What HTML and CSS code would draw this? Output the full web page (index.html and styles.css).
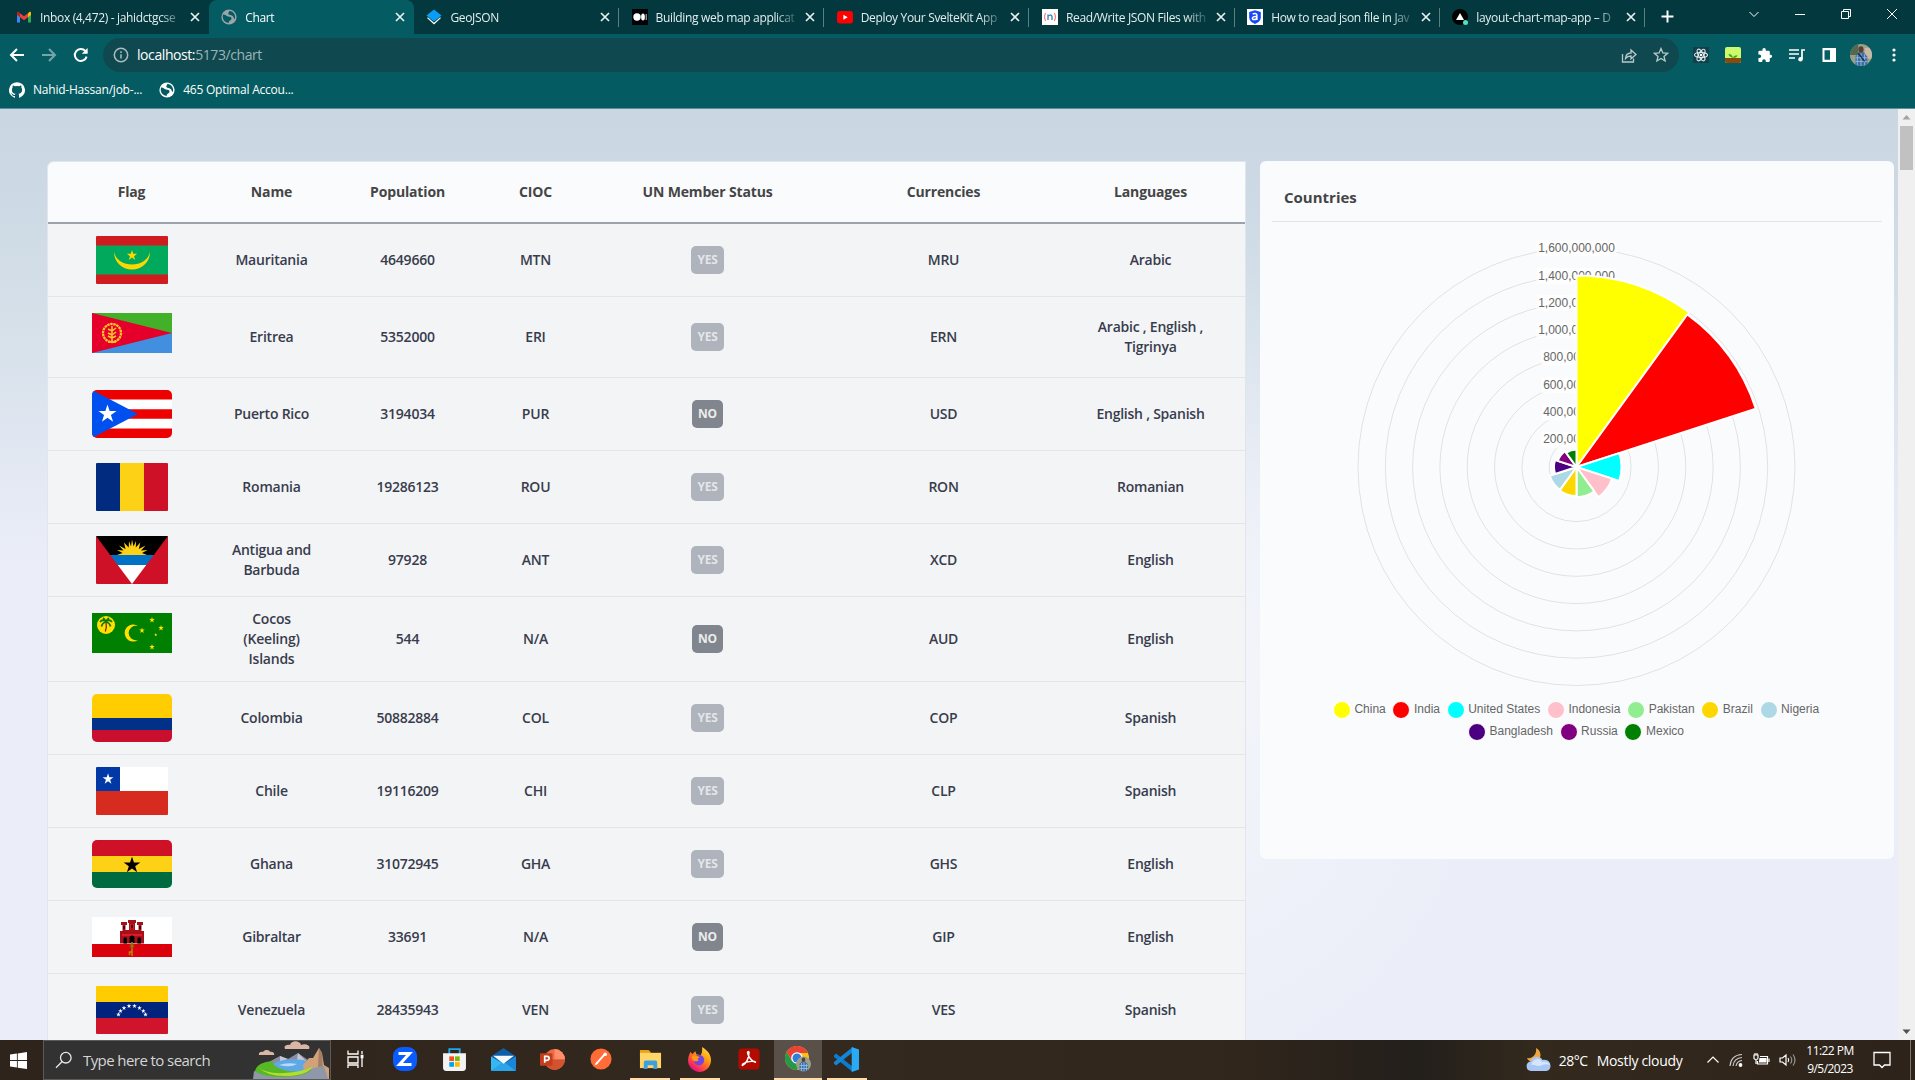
FILE: index.html
```html
<!DOCTYPE html>
<html lang="en">
<head>
<meta charset="utf-8">
<title>Chart</title>
<link rel="stylesheet" href="styles.css">
</head>
<body>
<svg class="defs" width="0" height="0" aria-hidden="true">
  <defs>
    <symbol id="x" viewBox="0 0 12 12"><path d="M2 2l8 8M10 2l-8 8" stroke="#e8f0f0" stroke-width="1.7" fill="none"/></symbol>
    <symbol id="star" viewBox="-10 -10 20 20"><path d="M0-10L2.25-3.09H9.51L3.63 1.18 5.88 8.09 0 3.82-5.88 8.09-3.63 1.18-9.51-3.09H-2.25z"/></symbol>
    <symbol id="globe" viewBox="0 0 16 16"><circle cx="8" cy="8" r="7.6" fill="currentColor"/><path class="land" d="M2 5.500C4 5 5 7 7 7.500c2 .5 3.500 0 3.500 2S8 11 7.600 14C4 13.500 2 11 1.700 8zM8.500 1.800C8 3.500 6.800 4 7.500 5.200c1 1.300 3 .3 4.500 2 .8.900.5 2.800 2 2.500C14.800 6 12.500 2.500 8.500 1.800z"/></symbol>
    <symbol id="avatar" viewBox="0 0 24 24"><clipPath id="avc"><circle cx="12" cy="12" r="12"/></clipPath><g clip-path="url(#avc)"><path fill="#9aa088" d="M0 0h24v24H0z"/><path fill="#53694f" d="M0 0h9v12H0z"/><path fill="#c9b9a4" d="M16 4h8v12h-8z"/><path fill="#3c6fa6" d="M6 24V13l4-4h5l4 5v10z"/><path stroke="#a7c8e8" d="M8 12v12M12 10v14M16 11v13M6 15h13M6 19h13" stroke-width=".8"/><path stroke="#232a36" stroke-width="1.500" d="M9 10l7 9"/><ellipse cx="12" cy="6" rx="2.800" ry="3.600" fill="#5a4034"/></g></symbol>
  </defs>
</svg>
<div class="screen">
  <header class="browser">
    <div class="tabstrip">
      <div class="tab">
        <svg class="fav" viewBox="0 0 16 16"><path fill="#4285f4" d="M1 4v9.500h3V7z"/><path fill="#34a853" d="M12 7v6.500h3V4z"/><path fill="#fbbc04" d="M12 4.200l1.500-1.400C14.500 2.300 15 3 15 4v2L12 8.200z"/><path fill="#c5221f" d="M1 4c0-1 .5-1.700 1.500-1.200L4 4.200v4L1 6z"/><path fill="#ea4335" d="M4 4.200l4 3 4-3v4l-4 3-4-3z"/></svg>
        <span class="tab-title">Inbox (4,472) - jahidctgcse</span><svg class="close"><use href="#x"/></svg>
      </div>
      <div class="tab active">
        <svg class="fav globe-tab"><use href="#globe"/></svg>
        <span class="tab-title">Chart</span><svg class="close"><use href="#x"/></svg>
      </div>
      <div class="tab line">
        <svg class="fav" viewBox="0 0 16 16"><path fill="#fff" d="M8 15.500L1 9l2-1.500L8 12l5-4.500L15 9z"/><path fill="#053a40" d="M8 13.800L1 7.500h14z"/><path fill="#0a9df5" d="M8 .5l7.500 6L8 12.500.5 6.500z"/></svg>
        <span class="tab-title">GeoJSON</span><svg class="close"><use href="#x"/></svg>
      </div>
      <div class="tab line">
        <svg class="fav" viewBox="0 0 16 16"><path d="M0 0h16v16H0z"/><circle cx="5" cy="8" r="3.700" fill="#fff"/><ellipse cx="11" cy="8" rx="1.900" ry="3.500" fill="#fff"/><path fill="#ccc" d="M13.700 5h1v6h-1z"/></svg>
        <span class="tab-title">Building web map applicat</span><svg class="close"><use href="#x"/></svg>
      </div>
      <div class="tab line">
        <svg class="fav" viewBox="0 0 16 16"><rect y="2" width="16" height="12.500" rx="3" fill="#f00"/><path fill="#fff" d="M6.400 5.700v5l4.300-2.500z"/></svg>
        <span class="tab-title">Deploy Your SvelteKit App</span><svg class="close"><use href="#x"/></svg>
      </div>
      <div class="tab line">
        <svg class="fav" viewBox="0 0 16 16"><path fill="#fff" d="M0 0h16v16H0z"/><path fill="none" stroke="#f2837b" stroke-width="1.200" d="M3.700 4Q1.400 8 3.700 12M12.300 4q2.300 4 0 8"/><path fill="none" stroke="#3d83c9" stroke-width="1.400" d="M6 11V5.500M6 7.500c.5-1.700 4-2.200 4 .3V11"/></svg>
        <span class="tab-title">Read/Write JSON Files with</span><svg class="close"><use href="#x"/></svg>
      </div>
      <div class="tab line">
        <svg class="fav" viewBox="0 0 16 16"><path fill="#fff" d="M0 0h16v16H0z"/><path fill="#1648f5" d="M8 1.200l5.800 1.800v5.500c0 3-2.500 5.200-5.800 6.500-3.300-1.300-5.800-3.500-5.800-6.500V3z"/><path fill="none" stroke="#fff" stroke-width="1.500" d="M5.700 5.300c1-1.300 4.200-1.300 4.200.8v5M9.900 7.500c-5.500-.6-5.300 3-3 3 1.800 0 3-1 3-2.600"/></svg>
        <span class="tab-title">How to read json file in Jav</span><svg class="close"><use href="#x"/></svg>
      </div>
      <div class="tab line">
        <svg class="fav" viewBox="0 0 16 16"><circle cx="8" cy="8" r="8"/><path fill="#fff" d="M8 4l4 7H4z"/><circle cx="13.500" cy="13.500" r="2.500" fill="#4fe3c1"/></svg>
        <span class="tab-title">layout-chart-map-app – D</span><svg class="close"><use href="#x"/></svg>
      </div>
      <svg class="newtab" viewBox="0 0 12 12"><path d="M6 .5v11M.5 6h11" stroke="#fff" stroke-width="1.800"/></svg>
      <div class="winctl">
        <svg viewBox="0 0 12 12"><path d="M1.500 4L6 8.500 10.500 4"/></svg>
        <svg viewBox="0 0 12 12"><path d="M1 6.500h10"/></svg>
        <svg viewBox="0 0 12 12"><path d="M1.500 3.500h7v7h-7zM3.500 3.500v-2h7v7h-2"/></svg>
        <svg viewBox="0 0 12 12"><path d="M1 1l10 10M11 1L1 11"/></svg>
      </div>
    </div>
    <div class="toolbar">
      <div class="nav">
        <svg viewBox="0 0 16 16"><path d="M15 8H2M8 2L2 8l6 6"/></svg>
        <svg class="dim" viewBox="0 0 16 16"><path d="M1 8h13M8 2l6 6-6 6"/></svg>
        <svg viewBox="0 0 16 16"><path d="M13.600 9.600A6 6 0 1 1 12.300 3.900L14 5.600"/><path class="solid" d="M14.600 1v5.800H8.800z"/></svg>
      </div>
      <div class="omnibox">
        <svg class="info" viewBox="0 0 16 16"><circle cx="8" cy="8" r="6.700"/><path d="M8 7.200v4.300M8 4.300v1.600"/></svg>
        <span class="url">localhost:<span>5173/chart</span></span>
        <svg class="omni-icon" viewBox="0 0 16 16"><path d="M1.500 7v8h11v-3.500M4.500 11.500C4.800 8 6.500 6 10 6V3l5 4.500-5 4.300V9C7.500 9 6 9.700 4.500 11.500z"/></svg>
        <svg class="omni-icon" viewBox="0 0 16 16"><path d="M8 1.500l1.900 4.400 4.700.4-3.600 3.100 1.100 4.600L8 11.500 3.900 14 5 9.400 1.400 6.300l4.700-.4z"/></svg>
      </div>
      <div class="exts">
        <svg viewBox="0 0 16 16"><path fill="#123f49" d="M0 0h16v16H0z"/><g fill="none" stroke="#dfe9ea" stroke-width="1.100"><ellipse cx="8" cy="8" rx="6.500" ry="2.500"/><ellipse cx="8" cy="8" rx="6.500" ry="2.500" transform="rotate(60 8 8)"/><ellipse cx="8" cy="8" rx="6.500" ry="2.500" transform="rotate(120 8 8)"/></g><circle cx="8" cy="8" r="1.300" fill="#fff"/></svg>
        <svg viewBox="0 0 16 16"><rect width="16" height="16" rx="2" fill="#cbfb6d"/><path fill="#8a4b0a" d="M0 11h16v3a2 2 0 0 1-2 2H2a2 2 0 0 1-2-2z"/><path fill="#3f9e1f" d="M8 11C7.500 8.500 6 7 3.500 7 4 9.500 5.500 10 8 11c.5-2 2-2.700 4.500-2.700C12 10 10.500 11 8 11z"/></svg>
        <svg viewBox="0 0 16 16"><path fill="#fff" d="M13.800 7.700h-1V5a1.300 1.300 0 0 0-1.300-1.300H8.800v-1a1.700 1.700 0 0 0-3.400 0v1H2.700A1.300 1.300 0 0 0 1.400 5v2.500h1a1.800 1.800 0 0 1 0 3.600h-1v2.600A1.300 1.300 0 0 0 2.700 15h2.500v-1a1.800 1.800 0 0 1 3.600 0v1h2.700a1.300 1.300 0 0 0 1.300-1.300V11h1a1.700 1.700 0 0 0 0-3.300z"/></svg>
        <svg viewBox="0 0 16 16"><path fill="none" stroke="#fff" stroke-width="1.700" d="M0 3h10M0 7h10M0 11h6M13 12V3h3"/><circle cx="11.500" cy="12.300" r="2.200" fill="#fff"/></svg>
        <svg viewBox="0 0 16 16"><path fill="#fff" fill-rule="evenodd" d="M1.500 1h13.500v14h-13.500zM3.500 3.300v9.400h5.500v-9.400z"/></svg>
        <svg class="face"><use href="#avatar"/></svg>
        <svg viewBox="0 0 16 16"><g fill="#fff"><circle cx="8" cy="3" r="1.600"/><circle cx="8" cy="8" r="1.600"/><circle cx="8" cy="13" r="1.600"/></g></svg>
      </div>
    </div>
    <div class="bookmarks">
      <svg viewBox="0 0 16 16"><path fill="#fff" d="M8 .2a8 8 0 0 0-2.500 15.600c.4 0 .5-.2.500-.4v-1.500c-2.200.5-2.700-1-2.700-1-.4-.9-.9-1.200-.9-1.200-.7-.5 0-.5 0-.5.800.1 1.200.9 1.200.9.800 1.200 1.900.9 2.400.7 0-.6.300-.9.500-1.100-1.800-.2-3.600-.9-3.600-4 0-.9.300-1.600.8-2.100 0-.2-.3-1 .1-2.100 0 0 .7-.2 2.200.8a7.500 7.500 0 0 1 4 0c1.500-1 2.200-.8 2.200-.8.400 1.100.1 1.900.1 2.100.5.500.8 1.200.8 2.100 0 3.100-1.900 3.800-3.700 4 .3.300.6.800.6 1.500v2.200c0 .2.100.5.500.4A8 8 0 0 0 8 .2z"/></svg>
      <span class="bm">Nahid-Hassan/job-...</span>
      <svg class="globe-bm"><use href="#globe"/></svg>
      <span class="bm">465 Optimal Accou...</span>
    </div>
  </header>

  <div class="viewport">
    <main class="page">
      <section class="table">
        <div class="tr th"><div>Flag</div><div>Name</div><div>Population</div><div>CIOC</div><div>UN Member Status</div><div>Currencies</div><div>Languages</div></div>

        <div class="tr"><div class="flag"><svg viewBox="0 0 72 48" class="f43"><path fill="#d01c1f" d="M0 0h72v48H0z"/><path fill="#00a95c" d="M0 9.600h72v28.800H0z"/><path fill="#ffd700" d="M18 16c0 9 7 17.500 18 17.500S54 25 54 16c-2 8-9 12.500-18 12.500S20 24 18 16z"/><use href="#star" x="30.500" y="14" width="11" height="11" fill="#ffd700"/></svg></div><div>Mauritania</div><div>4649660</div><div>MTN</div><div><span class="badge yes">YES</span></div><div>MRU</div><div>Arabic</div></div>

        <div class="tr tall"><div class="flag"><svg viewBox="0 0 80 40" class="f21"><path fill="#43b02a" d="M0 0h80v20H0z"/><path fill="#418fde" d="M0 20h80v20H0z"/><path fill="#e4002b" d="M0 0l80 20L0 40z"/><g fill="none" stroke="#ffc72c"><ellipse cx="20" cy="20" rx="9" ry="9" stroke-width="2.300" stroke-dasharray="2.500 .6"/><path stroke-width="1.500" d="M20 13v15M20 18l-4-2M20 18l4-3M20 22l-4-2M20 22l4-3M20 25l-4-2M20 25l4-2M16 29h8"/></g></svg></div><div>Eritrea</div><div>5352000</div><div>ERI</div><div><span class="badge yes">YES</span></div><div>ERN</div><div>Arabic , English ,<br>Tigrinya</div></div>

        <div class="tr"><div class="flag"><svg viewBox="0 0 80 48" class="f53"><path fill="#fff" d="M0 0h80v48H0z"/><path fill="#ed0000" d="M0 0h80v9.600H0zM0 19.200h80v9.600H0zM0 38.400h80V48H0z"/><path fill="#0050f0" d="M0 0l46 24L0 48z"/><use href="#star" x="6" y="14.500" width="19" height="19" fill="#fff"/></svg></div><div>Puerto Rico</div><div>3194034</div><div>PUR</div><div><span class="badge no">NO</span></div><div>USD</div><div>English , Spanish</div></div>

        <div class="tr"><div class="flag"><svg viewBox="0 0 72 48" class="f43"><path fill="#002b7f" d="M0 0h24v48H0z"/><path fill="#fcd116" d="M24 0h24v48H24z"/><path fill="#ce1126" d="M48 0h24v48H48z"/></svg></div><div>Romania</div><div>19286123</div><div>ROU</div><div><span class="badge yes">YES</span></div><div>RON</div><div>Romanian</div></div>

        <div class="tr"><div class="flag"><svg viewBox="0 0 72 48" class="f43"><path fill="#ce1126" d="M0 0h72v48H0z"/><clipPath id="ant"><path d="M0 0h72L36 48z"/></clipPath><g clip-path="url(#ant)"><path d="M0 0h72v19H0z"/><path fill="#fcd116" d="M21 19l5.500-2-5.500-3 6.500.5L23 9.500l6.500 3.500L28 6.500l4.700 5L33 5l2 5.500L36 3.500 37.500 10.500 40 5l-.2 6.500 4.500-5-1.500 6.500L49.500 9.500 45 14.500l6.500-.5-5.500 3 5 2z"/><path fill="#0072c6" d="M0 19h72v10H0z"/><path fill="#fff" d="M0 29h72v19H0z"/></g></svg></div><div>Antigua and<br>Barbuda</div><div>97928</div><div>ANT</div><div><span class="badge yes">YES</span></div><div>XCD</div><div>English</div></div>

        <div class="tr triple"><div class="flag"><svg viewBox="0 0 80 40" class="f21"><path fill="#008000" d="M0 0h80v40H0z"/><circle cx="14" cy="12" r="9" fill="#ffe000"/><path fill="none" stroke="#802000" stroke-width="1.200" d="M14 9.500q1 4-.7 9"/><path fill="none" stroke="#0b7a0b" stroke-width="1.800" d="M14 9q-3-3.500-6 0M14 9q3-3.500 6 0M14 9q-4 1-4.500 4.500M14 9q4 1 4.500 4.500M14 9q-1-3-3-4M14 9q1-3 3-4"/><path fill="#ffe000" d="M46 13a8.500 8.500 0 1 0 0 14 7.300 7.300 0 1 1 0-14z"/><g fill="#ffe000"><use href="#star" x="47" y="14.500" width="6" height="6"/><use href="#star" x="57" y="4" width="6" height="6"/><use href="#star" x="66" y="12" width="6" height="6"/><use href="#star" x="57" y="31" width="6" height="6"/><use href="#star" x="62" y="20" width="3.500" height="3.500"/></g></svg></div><div>Cocos<br>(Keeling)<br>Islands</div><div>544</div><div>N/A</div><div><span class="badge no">NO</span></div><div>AUD</div><div>English</div></div>

        <div class="tr"><div class="flag"><svg viewBox="0 0 80 48" class="f53"><path fill="#ffcd00" d="M0 0h80v24H0z"/><path fill="#003087" d="M0 24h80v12H0z"/><path fill="#c8102e" d="M0 36h80v12H0z"/></svg></div><div>Colombia</div><div>50882884</div><div>COL</div><div><span class="badge yes">YES</span></div><div>COP</div><div>Spanish</div></div>

        <div class="tr"><div class="flag"><svg viewBox="0 0 72 48" class="f43"><path fill="#fff" d="M0 0h72v24H0z"/><path fill="#0039a6" d="M0 0h24v24H0z"/><path fill="#d72b1f" d="M0 24h72v24H0z"/><use href="#star" x="6.300" y="6.300" width="11.500" height="11.500" fill="#fff"/></svg></div><div>Chile</div><div>19116209</div><div>CHI</div><div><span class="badge yes">YES</span></div><div>CLP</div><div>Spanish</div></div>

        <div class="tr"><div class="flag"><svg viewBox="0 0 80 48" class="f53"><path fill="#ce1126" d="M0 0h80v16H0z"/><path fill="#fcd116" d="M0 16h80v16H0z"/><path fill="#006b3f" d="M0 32h80v16H0z"/><use href="#star" x="31" y="16.500" width="18" height="17.500"/></svg></div><div>Ghana</div><div>31072945</div><div>GHA</div><div><span class="badge yes">YES</span></div><div>GHS</div><div>English</div></div>

        <div class="tr"><div class="flag"><svg viewBox="0 0 80 40" class="f21"><path fill="#fff" d="M0 0h80v27H0z"/><path fill="#da000c" d="M0 27h80v13H0z"/><path fill="#a5101b" d="M28 14h2.500V8H29V5h6v3h-1.500v5H37V6h-1V3h8v3h-1v7h3.500V8H45V5h6v3h-1.500v6H52v12.500H28z"/><path fill="#e11b26" d="M30 17h20v2H30zM38 7h1v6h-1zM41 7h1v6h-1z"/><path d="M31.500 26.500V22a1.700 1.700 0 0 1 3.400 0v4.500zM37.500 26V21a2.500 2.500 0 0 1 5 0v5zM45.500 26.500V22a1.700 1.700 0 0 1 3.400 0v4.500zM31.500 9h1.200v3h-1.200zM39.500 8h1.200v3h-1.200zM47.500 9h1.200v3h-1.200z"/><path fill="none" stroke="#b8860b" stroke-width="1.500" d="M40 25v14M37.500 38v-3H40"/><circle cx="40" cy="29" r="2" fill="none" stroke="#8c5f0a"/></svg></div><div>Gibraltar</div><div>33691</div><div>N/A</div><div><span class="badge no">NO</span></div><div>GIP</div><div>English</div></div>

        <div class="tr"><div class="flag"><svg viewBox="0 0 72 48" class="f43"><path fill="#fc0" d="M0 0h72v16H0z"/><path fill="#00247d" d="M0 16h72v16H0z"/><path fill="#cf142b" d="M0 32h72v16H0z"/><g fill="#fff"><use href="#star" x="20" y="26" width="5" height="5"/><use href="#star" x="22" y="22.500" width="5" height="5"/><use href="#star" x="25.500" y="19.500" width="5" height="5"/><use href="#star" x="30.500" y="17.500" width="5" height="5"/><use href="#star" x="36" y="17.500" width="5" height="5"/><use href="#star" x="41" y="19.500" width="5" height="5"/><use href="#star" x="44.800" y="22.500" width="5" height="5"/><use href="#star" x="47" y="26" width="5" height="5"/></g></svg></div><div>Venezuela</div><div>28435943</div><div>VEN</div><div><span class="badge yes">YES</span></div><div>VES</div><div>Spanish</div></div>
      </section>

      <aside class="card">
        <h2>Countries</h2>
        <svg class="polar" width="610" height="476" viewBox="-304.500 -245 610 476">
          <g fill="none" stroke="rgba(0,0,0,.1)"><circle r="27.300"/><circle r="54.600"/><circle r="81.900"/><circle r="109.300"/><circle r="136.600"/><circle r="163.900"/><circle r="191.200"/><circle r="218.500"/></g>
          <g fill="rgba(255,255,255,.75)"><path d="M-40-226.500h80v16h-80zM-40-199.200h80v16h-80zM-40-171.900h80v16h-80zM-40-144.600h80v16h-80zM-35-117.300h70v16h-70zM-35-89.900h70v16h-70zM-35-62.600h70v16h-70zM-35-35.300h70v16h-70z"/></g>
          <g class="ticks"><text y="-215">1,600,000,000</text><text y="-187">1,400,000,000</text><text y="-160">1,200,000,000</text><text y="-133">1,000,000,000</text><text y="-106">800,000,000</text><text y="-78">600,000,000</text><text y="-51">400,000,000</text><text y="-24">200,000,000</text></g>
          <g stroke="#fff" stroke-width="2" stroke-linejoin="bevel">
            <path fill="#ff0" d="M0 0V-191.500A191.500 191.500 0 0 1 112.600-154.900z"/>
            <path fill="red" d="M0 0L110.800-152.500A188.500 188.500 0 0 1 179.300-58.300z"/>
            <path fill="#0ff" d="M0 0L42.800-13.900A45 45 0 0 1 42.800 13.900z"/>
            <path fill="pink" d="M0 0L35.600 11.600A37.400 37.400 0 0 1 22 30.300z"/>
            <path fill="#90ee90" d="M0 0L17.800 24.400A30.200 30.200 0 0 1 0 30.200z"/>
            <path fill="gold" d="M0 0V29A29 29 0 0 1-17 23.500z"/>
            <path fill="#add8e6" d="M0 0L-16.600 22.800A28.200 28.200 0 0 1-26.800 8.700z"/>
            <path fill="indigo" d="M0 0L-21.400 7A22.500 22.500 0 0 1-21.400-7z"/>
            <path fill="purple" d="M0 0L-18.700-6.100A19.700 19.700 0 0 1-11.600-15.900z"/>
            <path fill="green" d="M0 0L-10.300-14.200A17.600 17.600 0 0 1 0-17.600z"/>
          </g>
        </svg>
        <div class="legend"><span class="china">China</span><span class="india">India</span><span class="us">United States</span><span class="indonesia">Indonesia</span><span class="pakistan">Pakistan</span><span class="brazil">Brazil</span><span class="nigeria">Nigeria</span></div>
        <div class="legend"><span class="bangladesh">Bangladesh</span><span class="russia">Russia</span><span class="mexico">Mexico</span></div>
      </aside>
    </main>
    <div class="scrollbar">
      <svg viewBox="0 0 17 17"><path fill="#a3a3a3" d="M4.500 10.500h8l-4-4.500z"/></svg>
      <div class="thumb"></div>
      <svg viewBox="0 0 17 17"><path fill="#505050" d="M4.500 6.500h8l-4 4.500z"/></svg>
    </div>
  </div>

  <footer class="taskbar">
    <div class="start"><svg width="17" height="17" viewBox="0 0 16 16"><path fill="#fff" d="M0 2.300l6.500-.9v6.200H0zM7.300 1.300L16 0v7.600H7.300zM0 8.400h6.500v6.200L0 13.700zM7.300 8.400H16V16l-8.700-1.200z"/></svg></div>
    <div class="search">
      <svg width="18" height="18" viewBox="0 0 18 18"><circle cx="10.800" cy="6.700" r="5.300"/><path d="M7.200 10.500L1 16.800"/></svg>
      <span>Type here to search</span>
      <svg class="scene" width="77" height="38" viewBox="0 0 77 38">
        <path fill="#d9b7a4" d="M32 8c-2-4 3-5 5-4 1-5 10-5 11 0 5-2 10 1 8 4zM6 14c-1-3 3-4 4-3 2-3 7-2 7 0 3-1 5 2 4 3z"/>
        <path fill="#8b8ea3" d="M14 22L27 15l8 3 10-6 10 7 6-2v14H14z"/><path fill="#c3c6d4" d="M27 15l8 3-8 3zM45 12l8 8-9-1z"/>
        <path fill="#5fa8e8" d="M19 24q10-8 32-5 6 5 0 11-17 6-32-6z"/><path fill="#b9dcfa" d="M26 24q8-3 18-1-6 4-18 1z"/>
        <path fill="#d1a179" d="M50 24l6-7 4 0 6-10 3 5 2 12 5 3v11H52z"/><path fill="#a57e62" d="M66 7l3 5 1 20-5-6z"/>
        <path fill="#57b825" d="M2 30q2-9 18-10-2 4 8 8 14 5 26 0l12 1v9H1z"/><path fill="#b5dc32" d="M5 26q8 7 26 6t28-6q-4 8-24 9T5 26z"/>
        <path fill="#8f98a8" d="M1 30q10 6 28 6 24 0 31-9l11-2 4 13H0z"/>
      </svg>
    </div>
    <div class="app"><svg width="18" height="18" viewBox="0 0 18 18" fill="none" stroke="#fff" stroke-width="1.300"><path d="M2 .5V4h10V.5M2 7h10v6H2zM2 18v-3h10v3M16 1v3M16 8v9"/><path fill="#fff" d="M15.300 5.500h1.500v2h-1.500z"/></svg></div>
    <div class="app"><svg width="24" height="24" viewBox="0 0 24 24"><rect width="24" height="24" rx="9" fill="#0b5cff"/><path fill="none" stroke="#fff" stroke-width="3" d="M5.500 6.500h11L6.500 17.500h12"/></svg></div>
    <div class="app"><svg width="25" height="25" viewBox="0 0 24 24"><path fill="none" stroke="#1ea7ee" stroke-width="1.800" d="M7 7V2h10v5"/><path fill="#f3f3f3" d="M1 6h22v14a3 3 0 0 1-3 3H4a3 3 0 0 1-3-3z"/><path fill="#f25022" d="M7 9h4.500v4.500H7z"/><path fill="#7fba00" d="M12.500 9H17v4.500h-4.500z"/><path fill="#00a4ef" d="M7 14.500h4.500V19H7z"/><path fill="#ffb900" d="M12.500 14.500H17V19h-4.500z"/></svg></div>
    <div class="app"><svg width="25" height="25" viewBox="0 0 24 24"><path fill="#0d5ea8" d="M0 9l12-8 12 8v8H0z"/><path fill="#35b8f1" d="M0 9l12 7-12 7z"/><path fill="#1b86d8" d="M24 9l-12 7 12 7z"/><path fill="#2aa5ea" d="M0 23l12-9 12 9z"/><path fill="#f5f8fb" d="M2 8.500h20L12 16z"/></svg></div>
    <div class="app"><svg width="25" height="25" viewBox="0 0 24 24"><circle cx="14" cy="12" r="10" fill="#ed6c47"/><path fill="#ff8f6b" d="M14 2a10 10 0 0 1 10 10H14z"/><path fill="#d35230" d="M24 12a10 10 0 0 1-20 0z"/><rect y="6" width="12" height="12" rx="1" fill="#c43e1c"/><path fill="none" stroke="#fff" stroke-width="1.600" d="M4.500 15V9h2.300q2 .2 2 1.900t-2 1.900H4.500"/></svg></div>
    <div class="app"><svg width="22" height="22" viewBox="0 0 24 24"><circle cx="12" cy="12" r="11.500" fill="#ff6c37"/><path stroke="#fff" stroke-width="2" stroke-linecap="round" d="M7 17l8-9"/><circle cx="16.500" cy="6.800" r="2" fill="#fff"/><path fill="#fff" d="M5 19l2-4 2 2z"/></svg></div>
    <div class="app open"><svg width="23" height="23" viewBox="0 0 24 24"><path fill="#e8a317" d="M1 2h9l2 2v4H1z"/><path fill="#ffd567" d="M1 5h22v16H1z"/><path fill="#3c9fe0" d="M5 22v-7q0-2 2-2h10q2 0 2 2v7h-4v-4H9v4z"/></svg></div>
    <div class="app open"><svg width="25" height="25" viewBox="0 0 24 24"><defs><linearGradient id="ff" x1="1" y1="0" x2=".3" y2="1"><stop stop-color="#fff04a"/><stop offset=".45" stop-color="#ff980e"/><stop offset=".8" stop-color="#ff3750"/><stop offset="1" stop-color="#d60f8a"/></linearGradient></defs><path fill="url(#ff)" d="M14.500 0c5 3 9 7.500 8.500 13.500C22.500 20 17.500 24 12 24S1 19.500 1 13c0-4 1.500-6.500 2.500-8.500L5 7l3-3 1 3 4 1c2-3 1.500-5 1.500-8z"/><circle cx="11.500" cy="12.500" r="5" fill="#7542e5"/><path fill="#ff980e" d="M4.500 9c4-2 6 0 8 1-2 0-3 2-1 3-3 2-7 0-7-4z"/></svg></div>
    <div class="app"><svg width="22" height="22" viewBox="0 0 24 24"><rect x=".5" y=".5" width="23" height="23" rx="4" fill="#b30b00"/><path fill="none" stroke="#fff" stroke-width="1.600" d="M5 19c4-2 7-8 7-14 0-1.500-2-1.500-1.500.500 1 5 5 9 8.500 10 .8-1.500-9-1.500-13.500 1.800-1 1-.9 1.700-.5 1.700z"/></svg></div>
    <div class="app open current"><svg width="26" height="26" viewBox="0 0 26 26"><circle cx="12" cy="12" r="12" fill="#fbc116"/><path fill="#ea4335" d="M1.600 6A12 12 0 0 1 22.400 6L22.900 7H12L6.500 14z"/><path fill="#279847" d="M1.600 6A12 12 0 0 0 12 24l5-9-10 0z"/><circle cx="12" cy="12" r="5.800" fill="#fff"/><circle cx="12" cy="12" r="4.500" fill="#2f7de1"/><circle cx="18.500" cy="18" r="7.500" fill="#9aa088"/><path fill="#3c6fa6" d="M14.500 24v-6l2.500-2.500h3l3 3V24q-4 2.500-8.500 0z"/><path stroke="#a7c8e8" stroke-width=".7" d="M16.500 17v8M19 16v9M21.500 18v6.500M14.500 19.500H23M14.500 22.500H23"/><ellipse cx="18.500" cy="13.800" rx="1.800" ry="2.300" fill="#5a4034"/></svg></div>
    <div class="app open"><svg width="25" height="25" viewBox="0 0 24 24"><path fill="#0b7bd0" d="M0 8l2-1.700L18 19v5L0 9.500z"/><path fill="#1484d6" d="M0 16l2 1.700L18 5V0L0 14.500z"/><path fill="#2aa9f5" d="M17 0l7 2.500v19L17 24z"/></svg></div>
    <div class="weather">
      <svg width="25" height="24" viewBox="0 0 25 24"><path fill="#f0a53a" d="M10 0c6 3 6 11 0 14-4 1-8-1-9-4 6 1 10-4 9-10z"/><path fill="#a9c7f4" d="M5 23a4.800 4.800 0 0 1-.5-9.500C6 8 14 7 16.500 12c6-1 8 3 8 6 0 4-3 5-5 5z"/><path fill="#d6e5fb" d="M5 17c2-7 9-8 11-3 5-1 7 1 8 3-5-2-8 1-11 1s-5-2-8-1z"/></svg>
      <span class="deg">28°C</span><span>Mostly cloudy</span>
    </div>
    <div class="tray">
      <svg width="14" height="14" viewBox="0 0 14 14"><path d="M1.500 9.500L7 4l5.500 5.500"/></svg>
      <svg width="14" height="14" viewBox="0 0 14 14"><path d="M1 13Q2 2 13 1.500M4 13q1-8 9-8.500M7 13q1-5 6-5.500" opacity=".75"/><circle cx="11.500" cy="12" r="1.300" fill="#fff"/></svg>
      <svg width="17" height="14" viewBox="0 0 17 14"><path d="M7 3.500h7.500v7.500H4.500V8M16 5.500v3.500M1 2h4v3q0 1.500-2 1.500T1 5zM2 0v2M4 0v2M3 6.500V11"/><path fill="#fff" d="M7 5.500h6v3.500H6.500z"/></svg>
      <svg width="17" height="14" viewBox="0 0 17 14"><path d="M1 5h2.500L7 2v10L3.500 9H1zM9 5q1.500 2 0 4"/><path opacity=".5" d="M11.500 3.500q2.500 3.500 0 7M14 1.500q4 5.500 0 11"/></svg>
    </div>
    <div class="clock"><span>11:22 PM</span><span>9/5/2023</span></div>
    <svg class="note" width="18" height="18" viewBox="0 0 18 18"><path d="M1 1.500h16v12.500h-5.500L9 16.500 6.500 14H1z"/></svg>
    <div class="peek"></div>
  </footer>
</div>
</body>
</html>
```
FILE: styles.css
```css
* { box-sizing: border-box; }
body { margin: 0; font-family: "Open Sans", "Noto Sans", sans-serif; }
svg { display: block; flex: none; }
.defs { position: absolute; }
.screen { display: flex; flex-direction: column; width: 1915px; height: 1080px; overflow: hidden; }

/* browser chrome */
.browser { height: 109px; background: #045c62; border-bottom: 1px solid #5f8f98; flex: none; }
.tabstrip { display: flex; height: 34px; padding-left: 3.500px; background: #02383e; color: #e4eeee; }
.tab { display: flex; align-items: center; gap: 8px; width: 205.200px; padding: 0 8px 0 12.500px; font-size: 12px; letter-spacing: -.34px; background: linear-gradient(#5b7f83, #5b7f83) right 0 top 8px / 0 19px no-repeat; }
.tab.line { background-size: 1px 19px; }
.tab.active { background: #045c62; border-radius: 8px 8px 0 0; color: #fff; }
.fav { width: 16px; height: 16px; }
.globe-tab { color: #9aa4ab; fill: #045c62; }
.tab-title { flex: 1; overflow: hidden; white-space: nowrap; -webkit-mask-image: linear-gradient(90deg, #000 85%, rgba(0,0,0,.15) 100%); mask-image: linear-gradient(90deg, #000 85%, rgba(0,0,0,.15) 100%); }
.close { width: 12px; height: 12px; }
.newtab { width: 13px; height: 13px; margin: 10px 0 0 16px; }
.winctl { display: flex; gap: 34px; margin: 8px 17px 0 auto; }
.winctl svg { width: 12px; height: 12px; fill: none; stroke: #fff; }
.toolbar { display: flex; align-items: center; height: 42px; }
.nav { display: flex; gap: 16px; padding: 0 14px 0 9px; }
.nav svg { width: 16px; height: 16px; fill: none; stroke: #fff; stroke-width: 2; }
.nav .dim { opacity: .45; }
.nav .solid { fill: #fff; stroke: none; }
.omnibox { display: flex; align-items: center; width: 1576px; height: 34px; padding: 0 10px; border-radius: 17px; background: #0f494f; }
.info { width: 16px; height: 16px; fill: none; stroke: #a9bcbf; stroke-width: 1.500; }
.url { flex: 1; margin-left: 8px; padding-bottom: 1px; font-size: 14px; letter-spacing: -.42px; color: #fff; }
.url span { color: #9db4b7; }
.omni-icon { width: 16px; height: 16px; margin-left: 16px; fill: none; stroke: #b9c9cb; stroke-width: 1.300; }
.exts { display: flex; align-items: center; gap: 16.200px; margin-left: 13.500px; }
.exts svg { width: 16px; height: 16px; }
.exts .face { width: 22px; height: 22px; margin: 0 -3px; }
.bookmarks { display: flex; align-items: center; height: 28px; padding-left: 9px; font-size: 12px; color: #fff; }
.bookmarks svg { width: 16px; height: 16px; color: #fff; fill: #045c62; }
.bm { margin: 0 17px 2px 8px; letter-spacing: -.22px; }

/* page */
.viewport { display: flex; height: 931px; overflow: hidden; flex: none; }
.page { display: flex; align-items: flex-start; gap: 14px; flex: 1; padding: 52px 2px 0 47px; background: radial-gradient(ellipse 330px 420px at 1180px 560px, rgba(255,255,255,.45), rgba(255,255,255,0)), linear-gradient(#cad7e2 0, #cdd9e4 10%, #d6e1ea 24%, #e0e6f1 35%, #ebeef8 49%); }
.table { width: 1199px; flex: none; border: 1px solid #e2e5ea; border-bottom: 0; border-radius: 7px 0 0 0; overflow: hidden; background: #f3f4f6; color: #383c4c; }
.tr { display: grid; grid-template-columns: 167px 113px 159px 97px 247px 225px 1fr; align-items: center; height: 73px; border-bottom: 1px solid #e4e5e9; text-align: center; font-size: 14px; font-weight: 550; line-height: 20px; letter-spacing: -.23px; }
.tr.th { height: 62px; background: #fafbfd; border-bottom: 2px solid #9ca3af; color: #454545; font-weight: 700; letter-spacing: -.15px; }
.tr.tall { height: 81px; }
.tr.triple { height: 85px; }
.flag { display: flex; justify-content: center; align-items: center; align-self: start; height: 48px; margin-top: 12px; padding-left: 1px; }
.flag svg { overflow: hidden; }
.f43 { width: 72px; height: 48px; border-radius: 1px; }
.f21 { width: 80px; height: 40px; }
.f53 { width: 80px; height: 48px; border-radius: 5px; }
.badge { display: inline-block; height: 28px; padding: 0 6px; border-radius: 5px; font-size: 12px; font-weight: 700; line-height: 28px; letter-spacing: -.2px; vertical-align: middle; }
.yes { background: #aeb3bc; color: #e3e6ea; }
.no { background: #80858e; color: #eceded; }

.card { width: 634px; height: 698px; flex: none; border-radius: 6px; background: #fafbfd; padding: 0 12px; }
.card h2 { margin: 0; height: 61px; padding: 25px 0 0 12px; border-bottom: 1px solid #e4e5e9; font-size: 15px; line-height: 22px; color: #454545; }
.polar { margin-bottom: 1px; }
.ticks { font: 12px "Liberation Sans", Arial, sans-serif; text-anchor: middle; fill: #666; }
.legend { display: flex; justify-content: center; gap: 6.700px; height: 22px; padding-right: 2px; font: 12px "Liberation Sans", Arial, sans-serif; color: #666; }
.legend span { display: flex; align-items: center; gap: 3.500px; height: 20px; }
.legend span::before { content: ""; width: 16px; height: 16px; border-radius: 50%; border: 1px solid #fff; background: var(--dot); margin-top: 2px; }
.china { --dot: #ff0; }
.india { --dot: red; }
.us { --dot: #0ff; }
.indonesia { --dot: pink; }
.pakistan { --dot: lightgreen; }
.brazil { --dot: gold; }
.nigeria { --dot: lightblue; }
.bangladesh { --dot: indigo; }
.russia { --dot: purple; }
.mexico { --dot: green; }

.scrollbar { display: flex; flex-direction: column; width: 17px; background: #f0f0f0; }
.scrollbar svg { width: 17px; height: 17px; }
.thumb { width: 13px; height: 44px; margin: 0 2px auto; background: #c1c1c1; }

/* taskbar */
.taskbar { display: flex; align-items: center; height: 40px; flex: none; color: #fff; background: linear-gradient(90deg, #2e241b, #33291f 45%, #30261c 65%, #231f1b 74%, #33291d 80%, #2d231a); }
.start { width: 43px; padding: 0 0 0 10px; }
.search { display: flex; align-items: center; width: 288px; height: 40px; padding-left: 11px; border: 1px solid #5c5a58; background: #323232; font-size: 15px; letter-spacing: -.58px; color: #d6d6d6; }
.search > svg:first-child { fill: none; stroke: #e6e6e6; stroke-width: 1.300; margin-right: 10px; }
.search span { flex: 1; }
.app { display: flex; justify-content: center; align-items: center; width: 48px; margin-right: 1.100px; height: 40px; border-bottom: 2px solid transparent; }
.app:nth-child(3) { margin: 0 2px 0 0; }
.app.open { background: linear-gradient(#ffdca8, #ffdca8) center bottom / 40px 2px no-repeat border-box; }
.app.current { background: linear-gradient(#ffdca8, #ffdca8) center bottom / 48px 2px no-repeat border-box, #59504a; }
.weather { display: flex; align-items: center; margin-left: auto; font-size: 14px; letter-spacing: -.3px; }
.deg { margin: 0 9px 0 8px; letter-spacing: -.46px; }
.tray { display: flex; align-items: center; gap: 9.500px; margin-left: 23px; }
.tray svg { fill: none; stroke: #fff; stroke-width: 1.200; }
.clock { display: flex; flex-direction: column; align-items: center; width: 48px; margin-left: 10px; font-size: 12px; line-height: 18px; letter-spacing: -.55px; white-space: nowrap; }
.note { margin-left: 19px; fill: none; stroke: #fff; stroke-width: 1.300; }
.peek { width: 1px; height: 40px; margin: 0 4px 0 19px; background: #7c756f; }
```
